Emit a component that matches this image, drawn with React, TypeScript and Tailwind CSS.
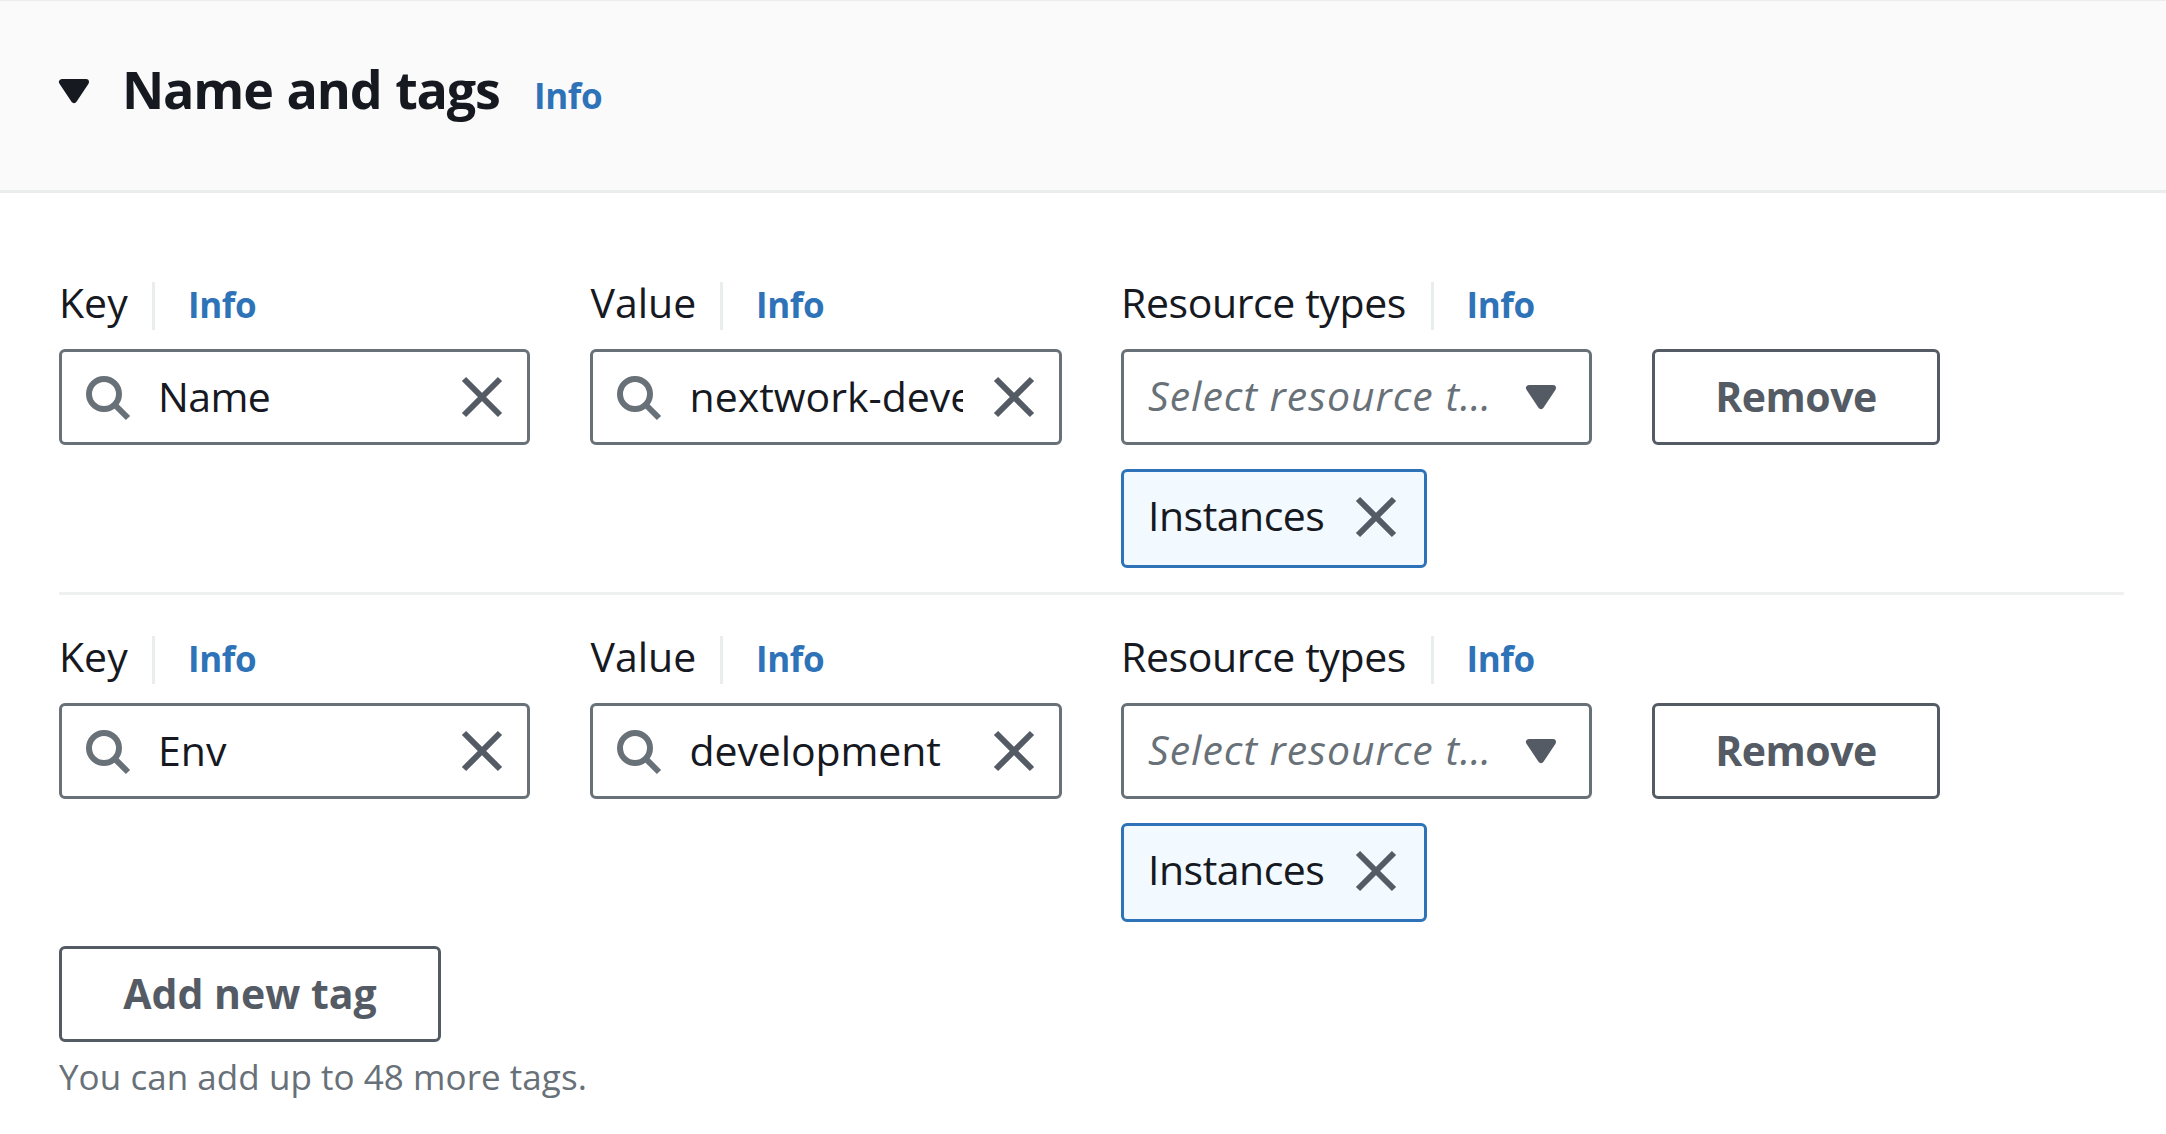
import type { ReactNode } from "react";

function SearchIcon() {
  return (
    <svg viewBox="0 0 16 16" className="size-12 shrink-0 text-[#687078]" fill="none" stroke="currentColor" strokeWidth="2">
      <circle cx="7" cy="7" r="5" />
      <path d="m15 15-4.5-4.5" />
    </svg>
  );
}

function CloseIcon({ className = "" }: { className?: string }) {
  return (
    <svg viewBox="0 0 16 16" className={`size-12 shrink-0 text-[#545b64] ${className}`} fill="none" stroke="currentColor" strokeWidth="2">
      <path d="m2 2 12 12M14 2 2 14" />
    </svg>
  );
}

function CaretIcon({ className = "" }: { className?: string }) {
  return (
    <svg viewBox="0 0 16 16" className={`size-12 shrink-0 ${className}`} fill="currentColor" stroke="currentColor" strokeWidth="2" strokeLinejoin="round">
      <path d="M4 5h8l-4 6z" />
    </svg>
  );
}

function FieldLabel({ children, className }: { children: ReactNode; className: string }) {
  return (
    <div className="mb-[17px] flex h-[60px] items-start">
      <span className={`shrink-0 whitespace-nowrap text-[41px] leading-[60px] ${className}`}>{children}</span>
      <a className="mt-2.5 h-12 border-l-3 border-[#eaeded] pl-[33px] text-[35px] leading-[46px] font-bold tracking-[-0.4px] text-[#2e73b8]">
        Info
      </a>
    </div>
  );
}

function SearchInput({ value, className = "" }: { value: string; className?: string }) {
  return (
    <div className="flex h-24 items-center gap-[27px] rounded-md border-3 border-[#687078] bg-white px-[21px]">
      <SearchIcon />
      <span className={`min-w-0 flex-1 overflow-hidden pb-0.5 text-[41px] leading-[60px] whitespace-nowrap ${className}`}>{value}</span>
      <CloseIcon />
    </div>
  );
}

function ResourceSelect() {
  return (
    <>
      <div className="flex h-24 items-center justify-between rounded-md border-3 border-[#687078] bg-white px-6">
        <span className="pb-1 text-[41px] leading-[60px] tracking-[1px] whitespace-nowrap text-[#687078] italic">Select resource t…</span>
        <CaretIcon className="text-[#545b64]" />
      </div>
      <div className="mt-6 flex h-[99px] w-[306px] items-center justify-between rounded-md border-3 border-[#2e73b8] bg-[#f2f9ff] px-6">
        <span className="pb-[7px] text-[41px] leading-[60px] tracking-[-0.5px]">Instances</span>
        <CloseIcon className="mb-[3px]" />
      </div>
    </>
  );
}

function Button({ children, className }: { children: ReactNode; className: string }) {
  return (
    <button
      className={`flex h-24 items-center justify-center rounded-md border-3 border-[#545b64] bg-white pb-[3px] text-[41px] leading-[60px] font-bold text-[#545b64] ${className}`}
    >
      {children}
    </button>
  );
}

type Tag = { name: string; value: string; nameClass: string; valueClass: string };

const tags: Tag[] = [
  { name: "Name", value: "nextwork-development", nameClass: "tracking-[-0.6px]", valueClass: "pl-px" },
  { name: "Env", value: "development", nameClass: "", valueClass: "pl-px tracking-[-0.1px]" },
];

function TagRow({ tag }: { tag: Tag }) {
  return (
    <div className="grid grid-cols-[471px_472px_471px_288px] gap-x-[59.5px]">
      <div>
        <FieldLabel className="w-[93px]">Key</FieldLabel>
        <SearchInput value={tag.name} className={tag.nameClass} />
      </div>
      <div>
        <FieldLabel className="w-[130.5px] pl-px">Value</FieldLabel>
        <SearchInput value={tag.value} className={tag.valueClass} />
      </div>
      <div>
        <FieldLabel className="w-[309.5px] tracking-[-0.4px]">Resource types</FieldLabel>
        <ResourceSelect />
      </div>
      <div className="pt-[77px]">
        <Button className="w-full pl-px tracking-[-0.5px]">Remove</Button>
      </div>
    </div>
  );
}

export default function App() {
  return (
    <main className="h-[1134px] w-[2166px] overflow-hidden bg-white font-['Open_Sans','Noto_Sans',sans-serif] text-[#16191f]">
      <header className="flex h-[193px] items-start border-t border-b-3 border-t-[#eaeded] border-b-[#eaeded] bg-[#fafafa] pl-[50px]">
        <CaretIcon className="mt-[66px]" />
        <div className="flex items-baseline pt-[52px] pl-6">
          <h2 className="w-[412px] text-[52px] leading-[72px] font-bold tracking-[-1.2px] whitespace-nowrap [word-spacing:1.5px]">Name and tags</h2>
          <a className="text-[35px] leading-[48px] font-bold tracking-[-0.4px] text-[#2e73b8]">Info</a>
        </div>
      </header>
      <section className="pt-[79px] pr-[42px] pl-[59px]">
        <TagRow tag={tags[0]} />
        <hr className="mt-6 mb-[31px] border-t-3 border-[#eff0f0]" />
        <TagRow tag={tags[1]} />
        <Button className="mt-6 w-[382px]">Add new tag</Button>
        <p className="mt-[11px] text-[35px] leading-[48px] tracking-[0.05px] text-[#687078]">You can add up to 48 more tags.</p>
      </section>
    </main>
  );
}
